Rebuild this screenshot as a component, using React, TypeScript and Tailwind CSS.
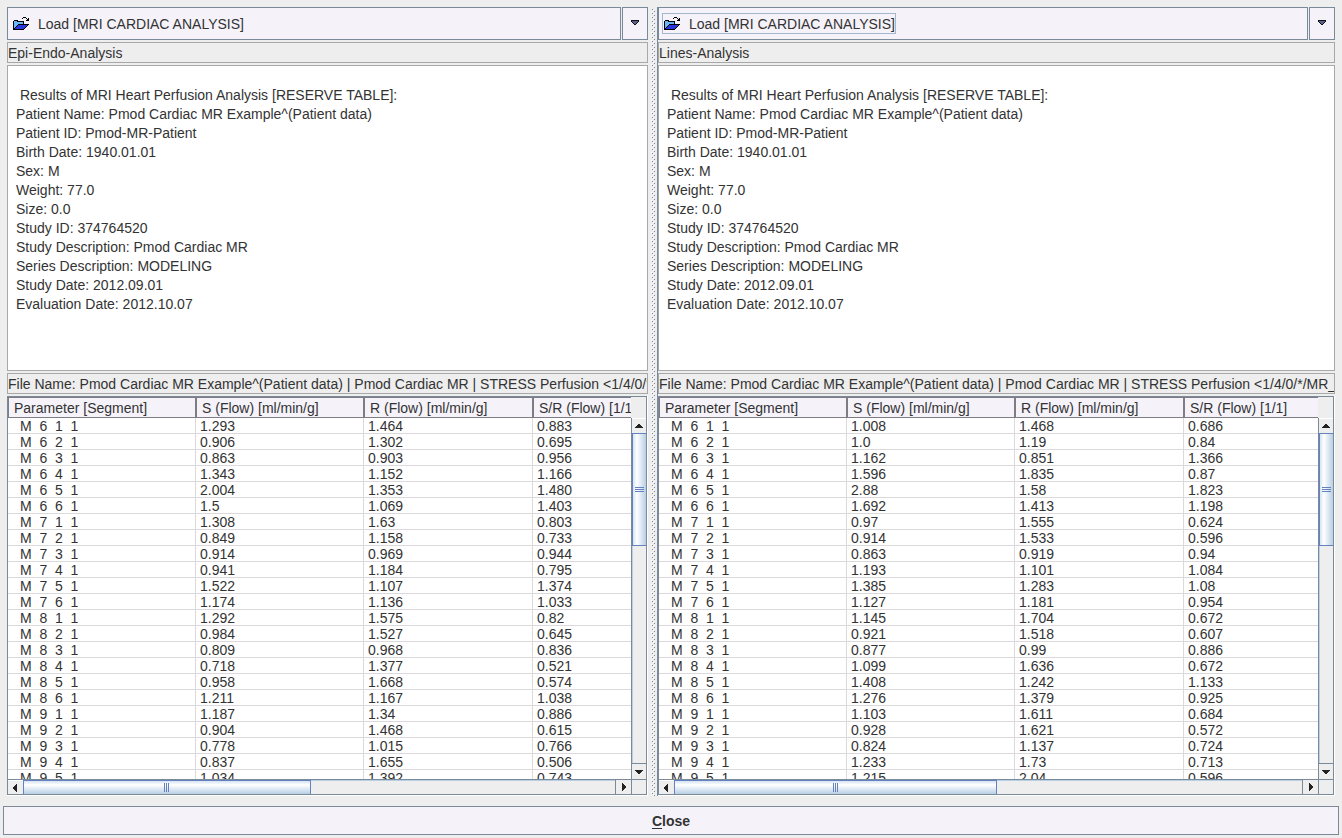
import { Fragment } from "react";

type Row = [string, string, string, string];

interface PaneData {
  id: string;
  title: string;
  focused: boolean;
  segments: Row[];
}

const info = [
  "\u00a0Results of MRI Heart Perfusion Analysis [RESERVE TABLE]:",
  "Patient Name: Pmod Cardiac MR Example^(Patient data)",
  "Patient ID: Pmod-MR-Patient",
  "Birth Date: 1940.01.01",
  "Sex: M",
  "Weight: 77.0",
  "Size: 0.0",
  "Study ID: 374764520",
  "Study Description: Pmod Cardiac MR",
  "Series Description: MODELING",
  "Study Date: 2012.09.01",
  "Evaluation Date: 2012.10.07",
];

const fileName =
  "File Name: Pmod Cardiac MR Example^(Patient data) | Pmod Cardiac MR | STRESS Perfusion <1/4/0/*/MR_0";

const headers = ["Parameter [Segment]", "S (Flow) [ml/min/g]", "R (Flow) [ml/min/g]", "S/R (Flow) [1/1]"];

const epiEndo: Row[] = [
  ["M  6  1  1", "1.293", "1.464", "0.883"],
  ["M  6  2  1", "0.906", "1.302", "0.695"],
  ["M  6  3  1", "0.863", "0.903", "0.956"],
  ["M  6  4  1", "1.343", "1.152", "1.166"],
  ["M  6  5  1", "2.004", "1.353", "1.480"],
  ["M  6  6  1", "1.5", "1.069", "1.403"],
  ["M  7  1  1", "1.308", "1.63", "0.803"],
  ["M  7  2  1", "0.849", "1.158", "0.733"],
  ["M  7  3  1", "0.914", "0.969", "0.944"],
  ["M  7  4  1", "0.941", "1.184", "0.795"],
  ["M  7  5  1", "1.522", "1.107", "1.374"],
  ["M  7  6  1", "1.174", "1.136", "1.033"],
  ["M  8  1  1", "1.292", "1.575", "0.82"],
  ["M  8  2  1", "0.984", "1.527", "0.645"],
  ["M  8  3  1", "0.809", "0.968", "0.836"],
  ["M  8  4  1", "0.718", "1.377", "0.521"],
  ["M  8  5  1", "0.958", "1.668", "0.574"],
  ["M  8  6  1", "1.211", "1.167", "1.038"],
  ["M  9  1  1", "1.187", "1.34", "0.886"],
  ["M  9  2  1", "0.904", "1.468", "0.615"],
  ["M  9  3  1", "0.778", "1.015", "0.766"],
  ["M  9  4  1", "0.837", "1.655", "0.506"],
  ["M  9  5  1", "1.034", "1.392", "0.743"],
];

const lines: Row[] = [
  ["M  6  1  1", "1.008", "1.468", "0.686"],
  ["M  6  2  1", "1.0", "1.19", "0.84"],
  ["M  6  3  1", "1.162", "0.851", "1.366"],
  ["M  6  4  1", "1.596", "1.835", "0.87"],
  ["M  6  5  1", "2.88", "1.58", "1.823"],
  ["M  6  6  1", "1.692", "1.413", "1.198"],
  ["M  7  1  1", "0.97", "1.555", "0.624"],
  ["M  7  2  1", "0.914", "1.533", "0.596"],
  ["M  7  3  1", "0.863", "0.919", "0.94"],
  ["M  7  4  1", "1.193", "1.101", "1.084"],
  ["M  7  5  1", "1.385", "1.283", "1.08"],
  ["M  7  6  1", "1.127", "1.181", "0.954"],
  ["M  8  1  1", "1.145", "1.704", "0.672"],
  ["M  8  2  1", "0.921", "1.518", "0.607"],
  ["M  8  3  1", "0.877", "0.99", "0.886"],
  ["M  8  4  1", "1.099", "1.636", "0.672"],
  ["M  8  5  1", "1.408", "1.242", "1.133"],
  ["M  8  6  1", "1.276", "1.379", "0.925"],
  ["M  9  1  1", "1.103", "1.611", "0.684"],
  ["M  9  2  1", "0.928", "1.621", "0.572"],
  ["M  9  3  1", "0.824", "1.137", "0.724"],
  ["M  9  4  1", "1.233", "1.73", "0.713"],
  ["M  9  5  1", "1.215", "2.04", "0.596"],
];

const panes: PaneData[] = [
  { id: "epi", title: "Epi-Endo-Analysis", focused: false, segments: epiEndo },
  { id: "lines", title: "Lines-Analysis", focused: true, segments: lines },
];

function FolderIcon() {
  return (
    <svg width="16" height="16" viewBox="0 0 16 16" shapeRendering="crispEdges" aria-hidden="true">
      <path d="M1 4h4v1h6v3h5v1h-1v1h-1v1h-1v1h-1v1h-1v1H0V5h1z" fill="#000" />
      <path d="M1 5h3v1h6v2H5v1H4v1H3v1H2v1H1z" fill="#66b8f8" />
      <path d="M5 9h9v1h-1v1h-1v1h-1v1H2v-1h1v-1h1v-1h1z" fill="#2a35dc" />
      <path d="M9 2h1V1h3v1h1v1h1V2h1v3h-3V4h1V3h-1V2h-3v1H9z" fill="#000" />
    </svg>
  );
}

function Arrow({ dir }: { dir: "up" | "down" | "left" | "right" }) {
  const d = {
    up: "M3 0h2v1h1v1h1v1h1v1H0V3h1V2h1V1h1z",
    down: "M0 0h8v1H7v1H6v1H5v1H3V3H2V2H1V1H0z",
    left: "M4 0v8H3V7H2V6H1V5H0V3h1V2h1V1h1V0z",
    right: "M0 0h1v1h1v1h1v1h1v2H3v1H2v1H1v1H0z",
  }[dir];
  const sideways = dir === "left" || dir === "right";
  return (
    <svg width={sideways ? 4 : 8} height={sideways ? 8 : 4} shapeRendering="crispEdges" aria-hidden="true">
      <path d={d} fill="#222" />
    </svg>
  );
}

function Divider() {
  return (
    <div className="flex w-[10px] shrink-0 border-r border-[#7a8a99]" role="separator">
      <svg className="h-full w-full" aria-hidden="true" shapeRendering="crispEdges">
        <defs>
          <pattern id="bumps" x="3" y="2" width="4" height="4" patternUnits="userSpaceOnUse">
            <rect x="1" y="0" width="1" height="1" fill="#7a8a99" />
            <rect x="2" y="1" width="1" height="1" fill="#fff" />
            <rect x="3" y="2" width="1" height="1" fill="#7a8a99" />
            <rect x="0" y="3" width="1" height="1" fill="#fff" />
          </pattern>
        </defs>
        <rect x="3" y="2" width="4" height="100%" fill="url(#bumps)" />
      </svg>
    </div>
  );
}

function LoadBar({ focused }: { focused: boolean }) {
  return (
    <div className="flex h-[33px] shrink-0 gap-px">
      <button className="flex min-w-0 flex-1 items-center border border-[#7a8a99] bg-[#f5f2fa] px-[3px] text-left">
        <span
          className={
            focused
              ? "flex h-[21px] items-center gap-[9px] border border-[#a3b8cc] pl-px"
              : "flex h-[21px] items-center gap-[9px] border border-transparent pl-px"
          }
        >
          <FolderIcon />
          <span className="whitespace-nowrap pt-[2px] leading-[17px]">Load [MRI CARDIAC ANALYSIS]</span>
        </span>
      </button>
      <button
        aria-label="More load options"
        className="flex w-[26px] items-center justify-center border border-[#7a8a99] bg-[#f5f2fa] pb-[2px]"
      >
        <svg width="8" height="5" shapeRendering="crispEdges" aria-hidden="true">
          <path d="M0 0h8v2H7v1H6v1H5v1H3V4H2V3H1V2H0z" fill="#111" />
          <path d="M1 1h6v1H6v1H5v1H3V3H2V2H1z" fill="#5a5f8c" />
        </svg>
      </button>
    </div>
  );
}

function Caption({ text }: { text: string }) {
  return (
    <div className="h-[21px] shrink-0 overflow-hidden whitespace-nowrap border border-[#a8a8a8] pt-[2px] leading-[17px]">
      {text}
    </div>
  );
}

function VerticalScroll() {
  return (
    <div className="flex w-[15px] shrink-0 flex-col border-l border-[#7a8a99]">
      <button
        aria-label="Scroll up"
        className="flex h-[15px] shrink-0 items-center justify-center border-t border-white"
      >
        <Arrow dir="up" />
      </button>
      <div className="flex flex-1 flex-col border-l border-[#b8cfe5]">
        <div className="-ml-px flex h-[113px] flex-col items-center justify-center gap-px border-y border-l border-[#6382bf] bg-linear-to-r from-[#d5e3f2] via-white via-30% to-[#b8cfe5]">
          <i className="h-px w-[9px] bg-[#6382bf]" />
          <i className="h-px w-[9px] bg-[#6382bf]" />
          <i className="h-px w-[9px] bg-[#6382bf]" />
        </div>
      </div>
      <button
        aria-label="Scroll down"
        className="flex h-4 shrink-0 items-center justify-center border-t border-[#7a8a99]"
      >
        <Arrow dir="down" />
      </button>
    </div>
  );
}

function HorizontalScroll({ thumb }: { thumb: string }) {
  return (
    <div className="flex h-[15px] shrink-0 border-t border-[#7a8a99]">
      <button
        aria-label="Scroll left"
        className="flex w-[15px] shrink-0 items-center justify-center border-t border-white pr-px"
      >
        <Arrow dir="left" />
      </button>
      <div className="flex flex-1 border-t border-[#b8cfe5]">
        <div className={thumb}>
          <i className="h-[9px] w-px bg-[#6382bf]" />
          <i className="h-[9px] w-px bg-[#6382bf]" />
          <i className="h-[9px] w-px bg-[#6382bf]" />
        </div>
      </div>
      <button
        aria-label="Scroll right"
        className="flex w-4 shrink-0 items-center justify-center border-l border-[#7a8a99]"
      >
        <Arrow dir="right" />
      </button>
      <div className="w-[15px] shrink-0 border-l border-[#7a8a99]" />
    </div>
  );
}

function ResultTable({ rows, wide }: { rows: Row[]; wide: boolean }) {
  return (
    <div className="border-b border-r border-white">
      <div className="flex h-[399px] flex-col border border-[#7a8a99]">
        <div className="flex min-h-0 flex-1">
          <div className="min-w-0 flex-1 overflow-hidden bg-white">
            <table className="w-[701px] table-fixed border-separate border-spacing-0">
              <colgroup>
                <col className="w-[188px]" />
                <col className="w-[168px]" />
                <col className="w-[169px]" />
                <col />
              </colgroup>
              <thead>
                <tr className="h-[21px]">
                  {headers.map((h) => (
                    <th
                      key={h}
                      className="h-[21px] whitespace-nowrap border border-[#7f7c84] bg-[#f5f2fa] p-0 pl-[5px] pt-px text-left font-normal leading-[18px]"
                    >
                      {h}
                    </th>
                  ))}
                </tr>
              </thead>
              <tbody>
                {rows.map((r) => (
                  <tr key={r[0]} className="h-4">
                    <td className="h-4 whitespace-pre border-b border-r border-[#dcd9dc] p-0 pl-3 pt-[2px] leading-[13px]">
                      {r[0]}
                    </td>
                    <td className="h-4 border-b border-r border-[#dcd9dc] p-0 pl-1 pt-[2px] leading-[13px]">{r[1]}</td>
                    <td className="h-4 border-b border-r border-[#dcd9dc] p-0 pl-1 pt-[2px] leading-[13px]">{r[2]}</td>
                    <td className="h-4 border-b border-r border-[#dcd9dc] p-0 pl-1 pt-[2px] leading-[13px]">{r[3]}</td>
                  </tr>
                ))}
              </tbody>
            </table>
          </div>
          <div className="flex shrink-0 flex-col">
            <div className="h-[21px] shrink-0" />
            <div className="flex min-h-0 flex-1">
              <VerticalScroll />
            </div>
          </div>
        </div>
        <HorizontalScroll
          thumb={
            wide
              ? "-mt-px flex w-[51.5%] items-center justify-center gap-px border-x border-t border-[#6382bf] bg-linear-to-b from-[#d5e3f2] via-white via-30% to-[#b8cfe5]"
              : "-mt-px flex w-[48.6%] items-center justify-center gap-px border-x border-t border-[#6382bf] bg-linear-to-b from-[#d5e3f2] via-white via-30% to-[#b8cfe5]"
          }
        />
      </div>
    </div>
  );
}

function Pane({ data, className }: { data: PaneData; className: string }) {
  return (
    <section className={className} aria-label={data.title}>
      <LoadBar focused={data.focused} />
      <Caption text={data.title} />
      <div className="h-[306px] shrink-0 border border-[#a8a8a8] bg-white px-2 pt-5 leading-[19px]">
        {info.map((line) => (
          <p key={line}>{line}</p>
        ))}
      </div>
      <Caption text={fileName} />
      <ResultTable rows={data.segments} wide={data.id === "lines"} />
    </section>
  );
}

export default function App() {
  return (
    <main className="flex min-h-screen flex-col bg-[#eeeeee] px-[3px] pb-[3px] pt-[7px] font-['Liberation_Sans',Arial,sans-serif] text-[14px] text-[#333]">
      <div className="flex px-1">
        {panes.map((p, i) => (
          <Fragment key={p.id}>
            {i > 0 && <Divider />}
            <Pane
              data={p}
              className={
                i === 0
                  ? "flex min-w-0 flex-[641] basis-0 flex-col gap-[2px]"
                  : "flex min-w-0 flex-[677] basis-0 flex-col gap-[2px]"
              }
            />
          </Fragment>
        ))}
      </div>
      <button className="mt-[10px] h-[29px] border border-[#7a8a99] bg-[#f5f2fa] pt-[2px] font-bold">
        <span className="underline underline-offset-2">C</span>lose
      </button>
    </main>
  );
}
